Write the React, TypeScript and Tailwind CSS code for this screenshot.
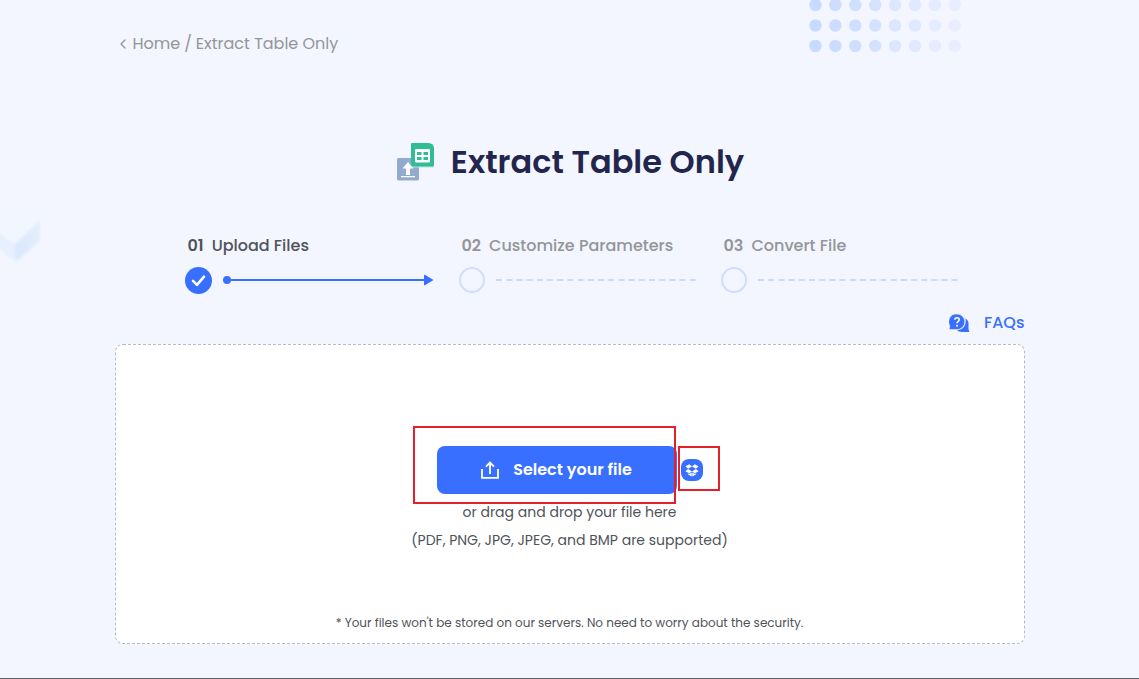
import { ChevronLeft } from "lucide-react";

const DOT_COLORS = [
  "#c7daff",
  "#cbdcff",
  "#cfdfff",
  "#d5e2ff",
  "#dbe7ff",
  "#dfe9ff",
  "#e5ecff",
  "#e8eeff",
];

function DotPattern() {
  return (
    <svg
      aria-hidden="true"
      className="absolute top-0 left-[71%]"
      width="154"
      height="54"
      viewBox="0 0 154 54"
    >
      {[5, 25.5, 46].map((cy) =>
        DOT_COLORS.map((fill, i) => (
          <circle key={`${cy}-${fill}`} cx={6.5 + i * 19.9} cy={cy} r="6.2" fill={fill} />
        )),
      )}
    </svg>
  );
}

function CubeShape() {
  return (
    <svg
      aria-hidden="true"
      className="absolute top-[200px] left-0"
      width="48"
      height="68"
      viewBox="0 0 48 68"
    >
      <defs>
        <linearGradient id="cubeSide" x1="0" y1="1" x2="1" y2="0">
          <stop offset="0" stopColor="#d8e6fd" />
          <stop offset="1" stopColor="#e6effe" />
        </linearGradient>
        <filter id="cubeBlur" x="-20%" y="-20%" width="140%" height="140%">
          <feGaussianBlur stdDeviation="1.5" />
        </filter>
      </defs>
      <g filter="url(#cubeBlur)">
        <path d="M-6 20L16 8 40 23 15 44-6 32Z" fill="#f2f7ff" />
        <path d="M-6 30L15 44V61L-6 45Z" fill="#e6f0fe" />
        <path d="M15 44L40 20V37Q40 41 37 43L18 60H15Z" fill="url(#cubeSide)" />
      </g>
    </svg>
  );
}

function TableLogo() {
  return (
    <svg aria-hidden="true" width="38" height="38" viewBox="0 0 38 38">
      <rect y="15" width="22" height="22.5" rx="1.5" fill="#91aace" />
      <path
        d="M14 1Q14 0 15 0H31Q37 0 37 6V23Q37 24.500 35.500 24.500H14Z"
        fill="#b9e2dd"
      />
      <path d="M14 1Q14 0 15 0H31Q37 0 37 6V22Q37 23.500 35.500 23.500H14Z" fill="#30bd93" />
      <rect x="18" y="6" width="15" height="13.500" rx="1" fill="#fff" />
      <path
        d="M20 9H24.500V12H20ZM26.500 9H31V12H26.500ZM20 14H24.500V17H20ZM26.500 14H31V17H26.500Z"
        fill="#30bd93"
      />
      <path d="M11 19L16.500 25.500H13V32H9V25.500H5.500ZM4 33H18V34.300H4Z" fill="#fff" />
    </svg>
  );
}

function CheckMark() {
  return (
    <svg aria-hidden="true" className="shrink-0" width="27" height="27" viewBox="0 0 27 27">
      <circle cx="13.5" cy="13.5" r="13.5" fill="#386fff" />
      <path
        d="M8 13.800L12 17.800 19 9.700"
        fill="none"
        stroke="#fff"
        strokeWidth="2.6"
        strokeLinecap="round"
        strokeLinejoin="round"
      />
    </svg>
  );
}

function EmptyCircle() {
  return <span className="size-[26px] shrink-0 rounded-full border-2 border-[#cfddff]" />;
}

function ActiveLine() {
  return (
    <svg aria-hidden="true" className="shrink-0" width="211" height="12" viewBox="0 0 211 12">
      <circle cx="4" cy="6" r="4" fill="#386fff" />
      <path d="M4 5H202V7H4Z" fill="#386fff" />
      <path d="M201 1.500Q201 .2 202.300 .9L210.500 6 202.300 11.100Q201 11.800 201 10.500Z" fill="#386fff" />
    </svg>
  );
}

function DashedLine() {
  return (
    <svg aria-hidden="true" className="shrink-0" width="201" height="2" viewBox="0 0 201 2">
      <path d="M0 1H201" stroke="#cbdaff" strokeWidth="2" strokeDasharray="6 4.2" />
    </svg>
  );
}

function FaqIcon() {
  return (
    <svg aria-hidden="true" width="21" height="19" viewBox="0 0 21 19">
      <path
        d="M16.500 4.500C19 6 20 8.500 19.500 12V15L20.300 18H13C10.800 18 9 17.300 8 16 13.500 16 17.500 12.500 16.500 4.500Z"
        fill="#386fff"
      />
      <path
        d="M8 0A7.800 7.800 0 0 1 8 15.600H0L.8 12A7.800 7.800 0 0 1 8 0Z"
        fill="#386fff"
        stroke="#f3f6ff"
        strokeWidth=".6"
      />
      <path
        d="M5.800 5.800C5.800 3 10.200 3 10.200 5.700 10.200 7.500 8 7.300 8 9.300"
        fill="none"
        stroke="#fff"
        strokeWidth="1.6"
      />
      <circle cx="8" cy="11.700" r="1" fill="#fff" />
    </svg>
  );
}

function UploadIcon() {
  return (
    <svg
      aria-hidden="true"
      width="18"
      height="18"
      viewBox="0 0 18 18"
      fill="none"
      stroke="currentColor"
      strokeWidth="1.8"
    >
      <path d="M1 8V16.800H17V8M9 13V1.800M5 5.600L9 1.600 13 5.600" />
    </svg>
  );
}

function DropboxIcon() {
  return (
    <svg aria-hidden="true" width="14" height="13" viewBox="0 0 14 13" fill="currentColor">
      <path d="M4.200 .3L7 2.400 3.100 4.800 .4 2.600ZM9.800 .3L13.600 2.600 10.900 4.800 7 2.400ZM3.100 5.100L7 7.500 4.300 9.300 .4 7.200ZM10.900 5.100L13.600 7.200 9.700 9.300 7 7.500ZM2.800 9.200L4.300 10.100 6.700 8.400V12.600L2.800 10.300ZM7.300 8.400L9.700 10.100 11.200 9.200V10.300L7.300 12.600Z" />
    </svg>
  );
}

interface StepLabelProps {
  number: string;
  title: string;
}

function StepLabel({ number, title }: StepLabelProps) {
  return (
    <div className="flex gap-2 pl-[3px] whitespace-nowrap">
      <span className="font-semibold">{number}</span>
      <span>{title}</span>
    </div>
  );
}

export default function App() {
  return (
    <div className="relative flex min-h-screen flex-col overflow-hidden border-b border-[#5c5f66] bg-[#f3f6ff] font-[Poppins,Inter,sans-serif] text-[#50535a]">
      <DotPattern />
      <CubeShape />

      <main className="relative mx-auto w-full max-w-[910px] pt-8 pb-8">
        <nav aria-label="Breadcrumb" className="flex items-center text-base text-[#939599]">
          <ChevronLeft className="mr-0.5 size-4" strokeWidth={2} />
          <a href="#home">Home</a>
          <span className="mx-1">/</span>
          <span>Extract Table Only</span>
        </nav>

        <header className="mt-[82px] flex items-center justify-center gap-4 pl-0.5">
          <TableLogo />
          <h1 className="text-[32px] leading-12 font-semibold text-[#22264c]">
            Extract Table Only
          </h1>
        </header>

        <ol className="mx-auto mt-12 grid w-[778px] max-w-full grid-cols-[274px_262px_238px] pl-1 text-base font-medium text-[#939599]">
          <li className="text-[#50535a]">
            <StepLabel number="01" title="Upload Files" />
            <div className="mt-2 flex h-7 items-center gap-[11px]">
              <CheckMark />
              <ActiveLine />
            </div>
          </li>
          <li>
            <StepLabel number="02" title="Customize Parameters" />
            <div className="mt-2 flex h-7 items-center gap-[11px]">
              <EmptyCircle />
              <DashedLine />
            </div>
          </li>
          <li>
            <StepLabel number="03" title="Convert File" />
            <div className="mt-2 flex h-7 items-center gap-[11px]">
              <EmptyCircle />
              <DashedLine />
            </div>
          </li>
        </ol>

        <div className="mt-[17px] flex justify-end">
          <a href="#faqs" className="flex items-center gap-3.5 text-base font-medium text-[#386fff]">
            <FaqIcon />
            FAQs
          </a>
        </div>

        <section className="mt-[9px] flex flex-col items-center rounded-lg border border-dashed border-[#b5bac9] bg-white px-4 pt-[101px] pb-2.5 text-center">
          <div className="flex items-center gap-1">
            <div className="relative">
              <button
                type="button"
                className="flex h-12 w-60 items-center justify-center gap-3.5 rounded-lg bg-[#386fff] text-base font-semibold text-white"
              >
                <UploadIcon />
                Select your file
              </button>
              <span className="pointer-events-none absolute -top-5 right-px -bottom-2.5 -left-6 border-2 border-[#e6202a]" />
            </div>
            <div className="relative flex">
              <button
                type="button"
                aria-label="Dropbox"
                className="flex size-[22px] items-center justify-center rounded-lg bg-[#386fff] text-white"
              >
                <DropboxIcon />
              </button>
              <span className="pointer-events-none absolute -top-[13px] -right-[17px] -bottom-2.5 -left-[3px] border-2 border-[#e6202a]" />
            </div>
          </div>
          <p className="mt-1 text-sm leading-7">
            or drag and drop your file here
            <br />
            (PDF, PNG, JPG, JPEG, and BMP are supported)
          </p>
          <p className="mt-[59px] text-xs leading-5">
            * Your files won't be stored on our servers. No need to worry about the security.
          </p>
        </section>
      </main>
    </div>
  );
}
